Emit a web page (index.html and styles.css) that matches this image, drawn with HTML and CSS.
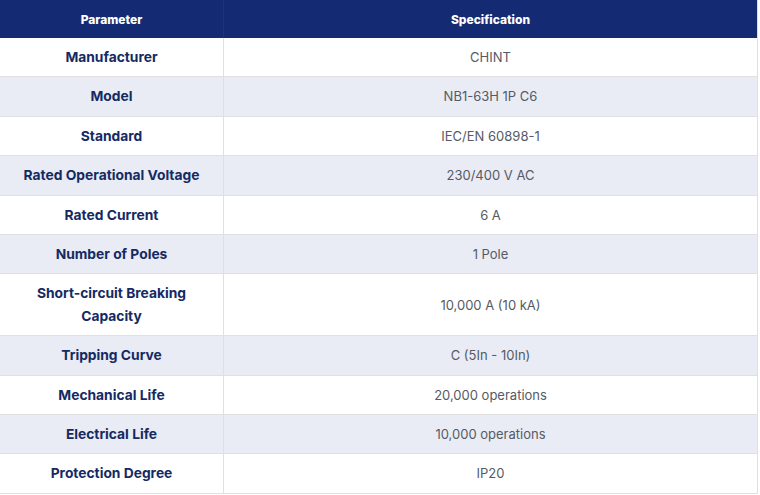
FILE: index.html
```html
<!DOCTYPE html>
<html lang="en">
<head>
<meta charset="utf-8">
<title>Specifications</title>
<link rel="stylesheet" href="styles.css">
</head>
<body>
<table class="spec">
  <thead>
    <tr><th class="col-param">Parameter</th><th>Specification</th></tr>
  </thead>
  <tbody>
    <tr><td class="label">Manufacturer</td><td class="value">CHINT</td></tr>
    <tr><td class="label">Model</td><td class="value">NB1-63H 1P C6</td></tr>
    <tr><td class="label">Standard</td><td class="value">IEC/EN 60898-1</td></tr>
    <tr><td class="label">Rated Operational Voltage</td><td class="value">230/400 V AC</td></tr>
    <tr><td class="label">Rated Current</td><td class="value">6 A</td></tr>
    <tr><td class="label">Number of Poles</td><td class="value">1 Pole</td></tr>
    <tr><td class="label">Short-circuit Breaking<br>Capacity</td><td class="value">10,000 A (10 kA)</td></tr>
    <tr><td class="label">Tripping Curve</td><td class="value">C (5In - 10In)</td></tr>
    <tr><td class="label">Mechanical Life</td><td class="value">20,000 operations</td></tr>
    <tr><td class="label">Electrical Life</td><td class="value">10,000 operations</td></tr>
    <tr><td class="label">Protection Degree</td><td class="value">IP20</td></tr>
  </tbody>
</table>
</body>
</html>
```
FILE: styles.css
```css
html, body {
  margin: 0;
  padding: 0;
  background: #ffffff;
}
body {
  font-family: Inter, "Open Sans", sans-serif;
}
.spec {
  width: 758px;
  border-collapse: collapse;
  table-layout: fixed;
}
.spec th {
  background: #142b73;
  color: #ffffff;
  font-size: 12px;
  font-weight: 800;
  height: 38px;
  padding: 0 8px;
  text-align: center;
  border-right: 1px solid #1d3580;
}
.spec th:last-child {
  border-right: 1px solid #dcdcdc;
}
.spec .col-param {
  width: 207px;
}
.spec td {
  text-align: center;
  padding: 8px;
  line-height: 22.4px;
  border: 1px solid #e0e0e0;
  border-top: none;
}
.spec td:first-child {
  border-left: none;
}
.spec tbody tr:nth-child(even) td {
  background: #e9ecf4;
}
.label {
  font-size: 13.8px;
  font-weight: 700;
  color: #152a63;
}
.value {
  font-size: 13px;
  font-weight: 400;
  color: #555a66;
}
```
